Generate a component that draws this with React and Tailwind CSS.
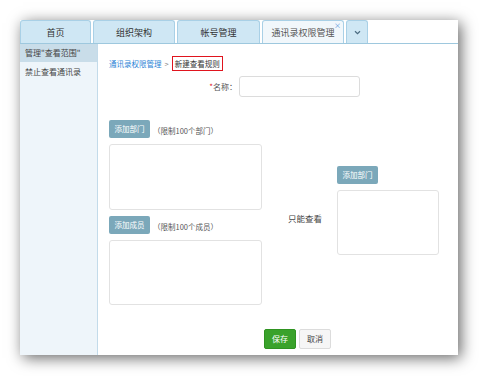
import { useState } from "react";

const tabs = [
  { label: "首页", w: "w-[71px]" },
  { label: "组织架构", w: "w-[82px]" },
  { label: "帐号管理", w: "w-[83px]" },
];

function Chevron() {
  return (
    <svg width="7" height="5" viewBox="0 0 7 5" fill="none">
      <path d="M1 1.2 L3.5 3.6 L6 1.2" stroke="#4a6b80" strokeWidth="1.2" />
    </svg>
  );
}

export default function App() {
  const [name, setName] = useState("");

  return (
    <div className="min-h-screen bg-white p-5 font-['Noto_Sans_CJK_SC','Noto_Sans',sans-serif] text-[#333]">
      <div className="flex h-[335px] w-[438px] flex-col bg-white shadow-[3px_3px_14px_rgba(0,0,0,0.6)]">
        {/* tab bar */}
        <div className="flex h-[24px] gap-[2px] border-b border-[#9ec8de]">
          {tabs.map((tab) => (
            <div
              key={tab.label}
              className={`flex h-[23px] ${tab.w} items-center justify-center rounded-t-[3px] border border-b-0 border-[#a9d0e6] bg-[#cfe7f4] text-[9px] leading-none text-[#333]`}
            >
              {tab.label}
            </div>
          ))}
          <div className="relative flex h-[23px] w-[82px] items-center justify-center rounded-t-[3px] border border-b-0 border-[#a9d0e6] bg-[#f1f7fb] text-[9px] leading-none text-[#555]">
            通讯录权限管理
            <span className="absolute right-[2px] top-[1px] text-[7px] leading-none text-[#4d8fd6]">×</span>
          </div>
          <div className="flex h-[23px] w-[22px] items-center justify-center rounded-t-[3px] border border-b-0 border-[#a9d0e6] bg-[#cfe7f4]">
            <Chevron />
          </div>
        </div>

        <div className="flex flex-1">
          {/* sidebar */}
          <div className="w-[78px] border-r border-[#c3dbea] bg-[#eef5fa]">
            <div className="flex h-[18px] items-center bg-[#c9dde9] pl-[5px] text-[8px] leading-none text-[#444]">
              {'管理"查看范围"'}
            </div>
            <div className="flex h-[20px] items-center pl-[5px] text-[8px] leading-none text-[#444]">
              禁止查看通讯录
            </div>
          </div>

          {/* content */}
          <div className="flex-1 pl-[11px] pt-[12px]">
            <div className="flex h-[15px] items-center text-[7.5px] leading-none">
              <span className="text-[#2b84d6]">通讯录权限管理</span>
              <span className="mx-[3px] text-[#888]">&gt;</span>
              <span className="flex h-[15px] items-center border-[1.5px] border-[#e0141e] px-[2px] text-[#333]">
                新建查看规则
              </span>
            </div>

            <div className="mt-[5px] flex items-center">
              <label className="w-[128px] text-right text-[8px] leading-none text-[#555]">
                <span className="text-[#e0141e]">*</span>名称：
              </label>
              <input
                value={name}
                onChange={(e) => setName(e.target.value)}
                className="ml-[2px] h-[21px] w-[121px] rounded-[3px] border border-[#dcdcdc] bg-white px-1 text-[8px] outline-none"
              />
            </div>

            <div className="mt-[23px] flex items-start">
              <div className="flex w-[153px] flex-col">
                <div className="flex items-center">
                  <button className="h-[18px] w-[41px] rounded-[2px] bg-[#7ba8ba] text-[7.5px] leading-none text-white">
                    添加部门
                  </button>
                  <span className="ml-[3px] mt-[3px] text-[7.5px] leading-none text-[#555]">（限制100个部门）</span>
                </div>
                <textarea className="mt-[6px] block h-[66px] w-[153px] resize-none rounded-[3px] border border-[#e2e2e2] outline-none" />
                <div className="mt-[6px] flex items-center">
                  <button className="h-[18px] w-[41px] rounded-[2px] bg-[#7ba8ba] text-[7.5px] leading-none text-white">
                    添加成员
                  </button>
                  <span className="ml-[3px] mt-[3px] text-[7.5px] leading-none text-[#555]">（限制100个成员）</span>
                </div>
                <textarea className="mt-[6px] block h-[65px] w-[153px] resize-none rounded-[3px] border border-[#e2e2e2] outline-none" />
              </div>

              <div className="ml-[26px] mt-[94px] w-[34px] text-[8.5px] leading-none text-[#444]">只能查看</div>

              <div className="ml-[15px] mt-[46px] flex flex-col items-start">
                <button className="h-[18px] w-[41px] rounded-[2px] bg-[#7ba8ba] text-[7.5px] leading-none text-white">
                  添加部门
                </button>
                <textarea className="mt-[6px] block h-[65px] w-[102px] resize-none rounded-[3px] border border-[#e2e2e2] outline-none" />
              </div>
            </div>

            <div className="ml-[155px] mt-[24px] flex gap-[3px]">
              <button className="h-[20px] w-[32px] rounded-[2px] border border-[#2f9321] bg-[#3aa22b] text-[8px] leading-none text-white">
                保存
              </button>
              <button className="h-[20px] w-[32px] rounded-[2px] border border-[#dcdcdc] bg-[#f6f6f6] text-[8px] leading-none text-[#444]">
                取消
              </button>
            </div>
          </div>
        </div>
      </div>
    </div>
  );
}
